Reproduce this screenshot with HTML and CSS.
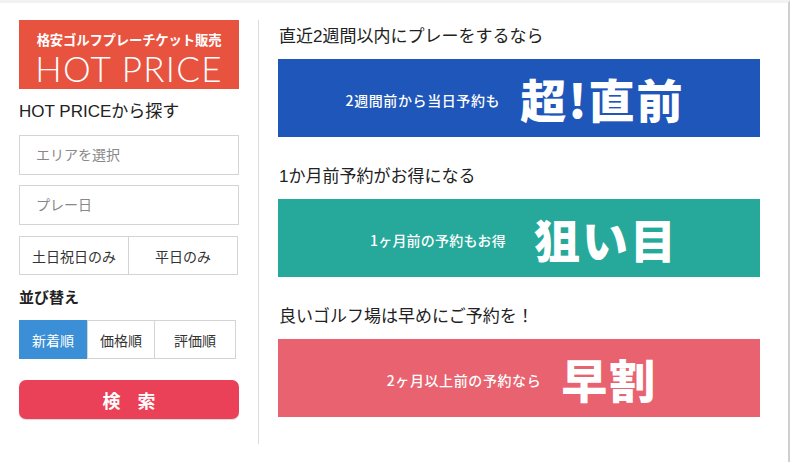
FILE: index.html
```html
<!DOCTYPE html>
<html lang="ja">
<head>
<meta charset="utf-8">
<title>HOT PRICE</title>
<link rel="stylesheet" href="styles.css">
</head>
<body>
<div class="page">
  <aside class="side">
    <div class="logo">
      <div class="logo-sub">格安ゴルフプレーチケット販売</div>
      <div class="logo-main">HOT PRICE</div>
    </div>
    <h2 class="side-title">HOT PRICEから探す</h2>
    <div class="field">エリアを選択</div>
    <div class="field">プレー日</div>
    <div class="btn-row">
      <div class="btn-cell">土日祝日のみ</div>
      <div class="btn-cell">平日のみ</div>
    </div>
    <h3 class="sort-title">並び替え</h3>
    <div class="tabs">
      <div class="tab active">新着順</div>
      <div class="tab">価格順</div>
      <div class="tab wide">評価順</div>
    </div>
    <div class="search">検 索</div>
  </aside>
  <div class="divider"></div>
  <main class="main">
    <section class="sec">
      <h2 class="sec-title">直近2週間以内にプレーをするなら</h2>
      <div class="banner blue">
        <span class="b-small">2週間前から当日予約も</span>
        <span class="b-big">超!直前</span>
      </div>
    </section>
    <section class="sec">
      <h2 class="sec-title">1か月前予約がお得になる</h2>
      <div class="banner teal">
        <span class="b-small">1ヶ月前の予約もお得</span>
        <span class="b-big">狙い目</span>
      </div>
    </section>
    <section class="sec">
      <h2 class="sec-title">良いゴルフ場は早めにご予約を！</h2>
      <div class="banner pink">
        <span class="b-small">2ヶ月以上前の予約なら</span>
        <span class="b-big">早割</span>
      </div>
    </section>
  </main>
</div>
</body>
</html>
```
FILE: styles.css
```css
* { box-sizing: border-box; }
html, body { margin: 0; padding: 0; }
body {
  width: 790px;
  height: 462px;
  background: #fff;
  font-family: "Liberation Sans", "Noto Sans CJK JP", sans-serif;
  color: #222;
  overflow: hidden;
}
.page {
  display: flex;
  height: 462px;
  border-top: 3px solid #f2f2f2;
  border-right: 2px solid #cfcfcf;
}
.side {
  width: 258px;
  padding: 17px 19px 0 19px;
  display: flex;
  flex-direction: column;
}
.logo {
  width: 220px;
  height: 69px;
  background: #e8533f;
  color: #fff;
  display: flex;
  flex-direction: column;
  align-items: center;
}
.logo-sub {
  font-family: "Noto Sans CJK JP", sans-serif;
  font-size: 13.4px;
  font-weight: 700;
  line-height: 15px;
  margin-top: 12px;
  letter-spacing: -0.2px;
}
.logo-main {
  font-family: "Lato", "Liberation Sans", sans-serif;
  font-weight: 300;
  font-size: 35px;
  line-height: 42px;
  letter-spacing: 1.3px;
}
.side-title {
  margin: 11px 0 0 0;
  font-size: 17px;
  font-weight: 400;
  line-height: 24px;
  color: #222;
}
.field {
  width: 220px;
  height: 40px;
  border: 1px solid #d4d4d4;
  margin-top: 10px;
  padding-left: 16px;
  line-height: 38px;
  font-size: 14px;
  color: #888;
}
.side-title + .field { margin-top: 11px; }
.btn-row {
  width: 219px;
  height: 39px;
  display: flex;
  margin-top: 11px;
  border: 1px solid #d4d4d4;
}
.btn-cell {
  flex: 1;
  display: flex;
  align-items: center;
  justify-content: center;
  font-size: 14px;
  color: #333;
}
.btn-cell + .btn-cell { border-left: 1px solid #d4d4d4; }
.sort-title {
  margin: 12px 0 0 0;
  font-size: 15px;
  font-weight: 700;
  line-height: 22px;
  color: #222;
}
.tabs {
  display: flex;
  width: 217px;
  height: 39px;
  margin-top: 11px;
  border: 1px solid #d4d4d4;
}
.tab {
  width: 67px;
  display: flex;
  align-items: center;
  justify-content: center;
  font-size: 14px;
  color: #333;
}
.tab + .tab { border-left: 1px solid #d4d4d4; }
.tab.wide { flex: 1; }
.tab.active {
  background: #3a8fd6;
  color: #fff;
  margin: -1px 0 -1px -1px;
  width: 68px;
}
.search {
  margin-top: 21px;
  width: 220px;
  height: 39px;
  border-radius: 7px;
  background: #ea4058;
  color: #fff;
  font-size: 18px;
  font-weight: 700;
  letter-spacing: 6px;
  display: flex;
  align-items: center;
  justify-content: center;
  padding-left: 6px;
  box-shadow: 0 1px 1px rgba(0,0,0,0.15);
}
.divider {
  width: 1px;
  background: #dcdcdc;
  margin: 17px 0 18px 0;
}
.main {
  flex: none;
  width: 502px;
  padding: 22px 0 0 19px;
  display: flex;
  flex-direction: column;
  gap: 28px;
}
.sec-title {
  margin: 0 0 10px 1px;
  font-size: 17px;
  font-weight: 400;
  line-height: 24px;
  color: #222;
}
.banner {
  width: 482px;
  height: 78px;
  display: flex;
  align-items: center;
  justify-content: center;
  gap: 20px;
  color: #fff;
  font-family: "Noto Sans CJK JP", sans-serif;
}
.blue { background: #1f56b9; }
.teal { background: #26a99b; }
.pink { background: #e8636f; }
.b-small {
  font-size: 14px;
  font-weight: 500;
  letter-spacing: 0.6px;
  margin-top: 4px;
}
.b-big {
  font-size: 46px;
  font-weight: 900;
  line-height: 1;
  letter-spacing: 2px;
}
.blue .b-small { margin-left: -8px; }
.teal .b-small { margin-left: 10px; letter-spacing: 0.2px; margin-right: 8px; }
.pink .b-small { margin-left: 6px; margin-right: 0; }
```
